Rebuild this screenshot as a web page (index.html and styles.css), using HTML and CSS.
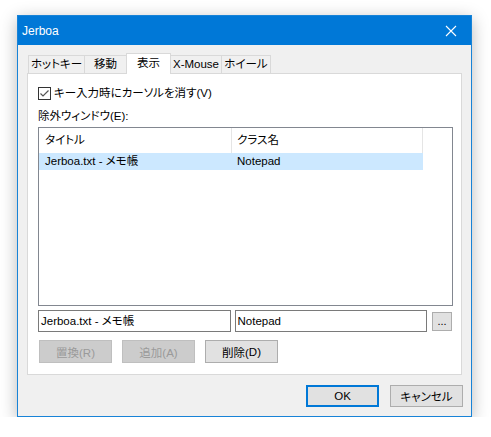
FILE: index.html
```html
<!DOCTYPE html>
<html lang="ja">
<head>
<meta charset="utf-8">
<title>Jerboa</title>
<link rel="stylesheet" href="styles.css">
</head>
<body>
<div class="window">
  <div class="titlebar">
    <span class="title">Jerboa</span>
    <svg class="close" width="12" height="12" viewBox="0 0 12 12"><path d="M1 1 L11 11 M11 1 L1 11" stroke="#fff" stroke-width="1.1" fill="none"/></svg>
  </div>
  <div class="client">
    <div class="tabs">
      <div class="tab w1">ホットキー</div>
      <div class="tab w2">移動</div>
      <div class="tab sel w3">表示</div>
      <div class="tab w4">X-Mouse</div>
      <div class="tab w5">ホイール</div>
    </div>
    <div class="panel">
      <div class="checkrow">
        <svg class="cbox" width="13" height="13" viewBox="0 0 13 13"><rect x="0.5" y="0.5" width="12" height="12" fill="#fff" stroke="#333"/><path d="M2.5 6.5 L5 9 L10.5 3.5" stroke="#555" stroke-width="1.2" fill="none"/></svg>
        <span class="label">キー入力時にカーソルを消す(<u>V</u>)</span>
      </div>
      <div class="grouplabel">除外ウィンドウ(<u>E</u>):</div>
      <div class="list">
        <div class="lhead">
          <div class="c1">タイトル</div>
          <div class="c2">クラス名</div>
        </div>
        <div class="lrow">
          <div class="c1">Jerboa.txt - メモ帳</div>
          <div class="c2">Notepad</div>
        </div>
      </div>
      <div class="edits">
        <div class="edit">Jerboa.txt - メモ帳</div>
        <div class="edit">Notepad</div>
        <div class="dots">...</div>
      </div>
      <div class="btns">
        <div class="btn dis">置換(R)</div>
        <div class="btn dis">追加(A)</div>
        <div class="btn">削除(<u>D</u>)</div>
      </div>
    </div>
    <div class="footer">
      <div class="btn ok">OK</div>
      <div class="btn">キャンセル</div>
    </div>
  </div>
</div>
</body>
</html>
```
FILE: styles.css
```css
html, body {
  margin: 0;
  padding: 0;
  background: #ffffff;
}
body {
  font-family: "Liberation Sans", "Noto Sans CJK JP", sans-serif;
  font-size: 11.5px;
  color: #000;
  font-feature-settings: "palt";
}
u { text-decoration: none; }
.window {
  margin: 15px 0 0 17px;
  width: 455px;
  height: 402px;
  box-sizing: border-box;
  border: 1px solid #1883d7;
  display: flex;
  flex-direction: column;
  box-shadow: 0 4px 16px rgba(0,0,0,0.28);
}
.titlebar {
  height: 29px;
  background: #0078d7;
  display: flex;
  align-items: center;
  justify-content: space-between;
  padding: 0 14px 0 4px;
  color: #fff;
  font-size: 12px;
  flex: none;
}
.close { display: block; }
.client {
  flex: 1;
  background: #f0f0f0;
  padding: 8px 9px 0 9px;
  display: flex;
  flex-direction: column;
}
.tabs {
  display: flex;
  height: 20px;
  padding-left: 1px;
  align-items: flex-end;
}
.tab {
  height: 18px;
  box-sizing: border-box;
  border: 1px solid #d9d9d9;
  border-bottom: none;
  margin-right: -1px;
  background: #f0f0f0;
  display: flex;
  align-items: center;
  justify-content: center;
  line-height: 1;
  padding-top: 1px;
}
.tab.sel {
  height: 21px;
  margin-bottom: -1px;
  background: #fff;
  position: relative;
  z-index: 1;
  padding-top: 0;
}
.w1 { width: 57px; }
.w2 { width: 43px; }
.w3 { width: 45px; }
.w4 { width: 52px; }
.w5 { width: 50px; }
.panel {
  height: 302px;
  box-sizing: border-box;
  border: 1px solid #d9d9d9;
  background: #fff;
  padding: 13px 9px 0 10px;
  flex: none;
}
.checkrow {
  display: flex;
  align-items: center;
  height: 13px;
}
.cbox { display: block; flex: none; }
.label { margin-left: 3px; line-height: 13px; }
.grouplabel {
  margin-top: 9px;
  line-height: 15px;
  height: 15px;
}
.list {
  margin-top: 3px;
  width: 415px;
  height: 179px;
  box-sizing: border-box;
  border: 1px solid #828790;
  background: #fff;
}
.lhead, .lrow {
  display: flex;
  width: 384px;
}
.lhead { height: 25px; align-items: center; }
.lhead .c1, .lhead .c2 {
  height: 25px;
  line-height: 25px;
  border-right: 1px solid #e5e5e5;
  box-sizing: border-box;
}
.c1 { width: 193px; padding-left: 6px; box-sizing: border-box; }
.c2 { width: 191px; padding-left: 5px; box-sizing: border-box; }
.lrow {
  height: 17px;
  line-height: 17px;
  background: #cce8ff;
}
.edits {
  margin-top: 4px;
  display: flex;
  align-items: center;
  height: 22px;
}
.edit {
  width: 193px;
  height: 22px;
  box-sizing: border-box;
  border: 1px solid #7a7a7a;
  padding-left: 2px;
  line-height: 20px;
  margin-right: 4px;
}
.edit + .edit { margin-right: 5px; }
.dots {
  width: 20px;
  height: 19px;
  box-sizing: border-box;
  border: 1px solid #adadad;
  background: #e1e1e1;
  text-align: center;
  line-height: 16px;
  font-size: 11px;
}
.btns {
  margin-top: 8px;
  margin-left: 1px;
  display: flex;
  gap: 10px;
}
.btn {
  width: 73px;
  height: 23px;
  box-sizing: border-box;
  border: 1px solid #adadad;
  background: #e1e1e1;
  display: flex;
  align-items: center;
  justify-content: center;
}
.btn.dis {
  background: #cccccc;
  border-color: #bfbfbf;
  color: #9a9a9a;
}
.footer {
  margin-top: 10px;
  display: flex;
  justify-content: flex-end;
  gap: 11px;
  margin-right: -1px;
}
.footer .btn { height: 22px; }
.btn.ok {
  border: 2px solid #0078d7;
}
```
